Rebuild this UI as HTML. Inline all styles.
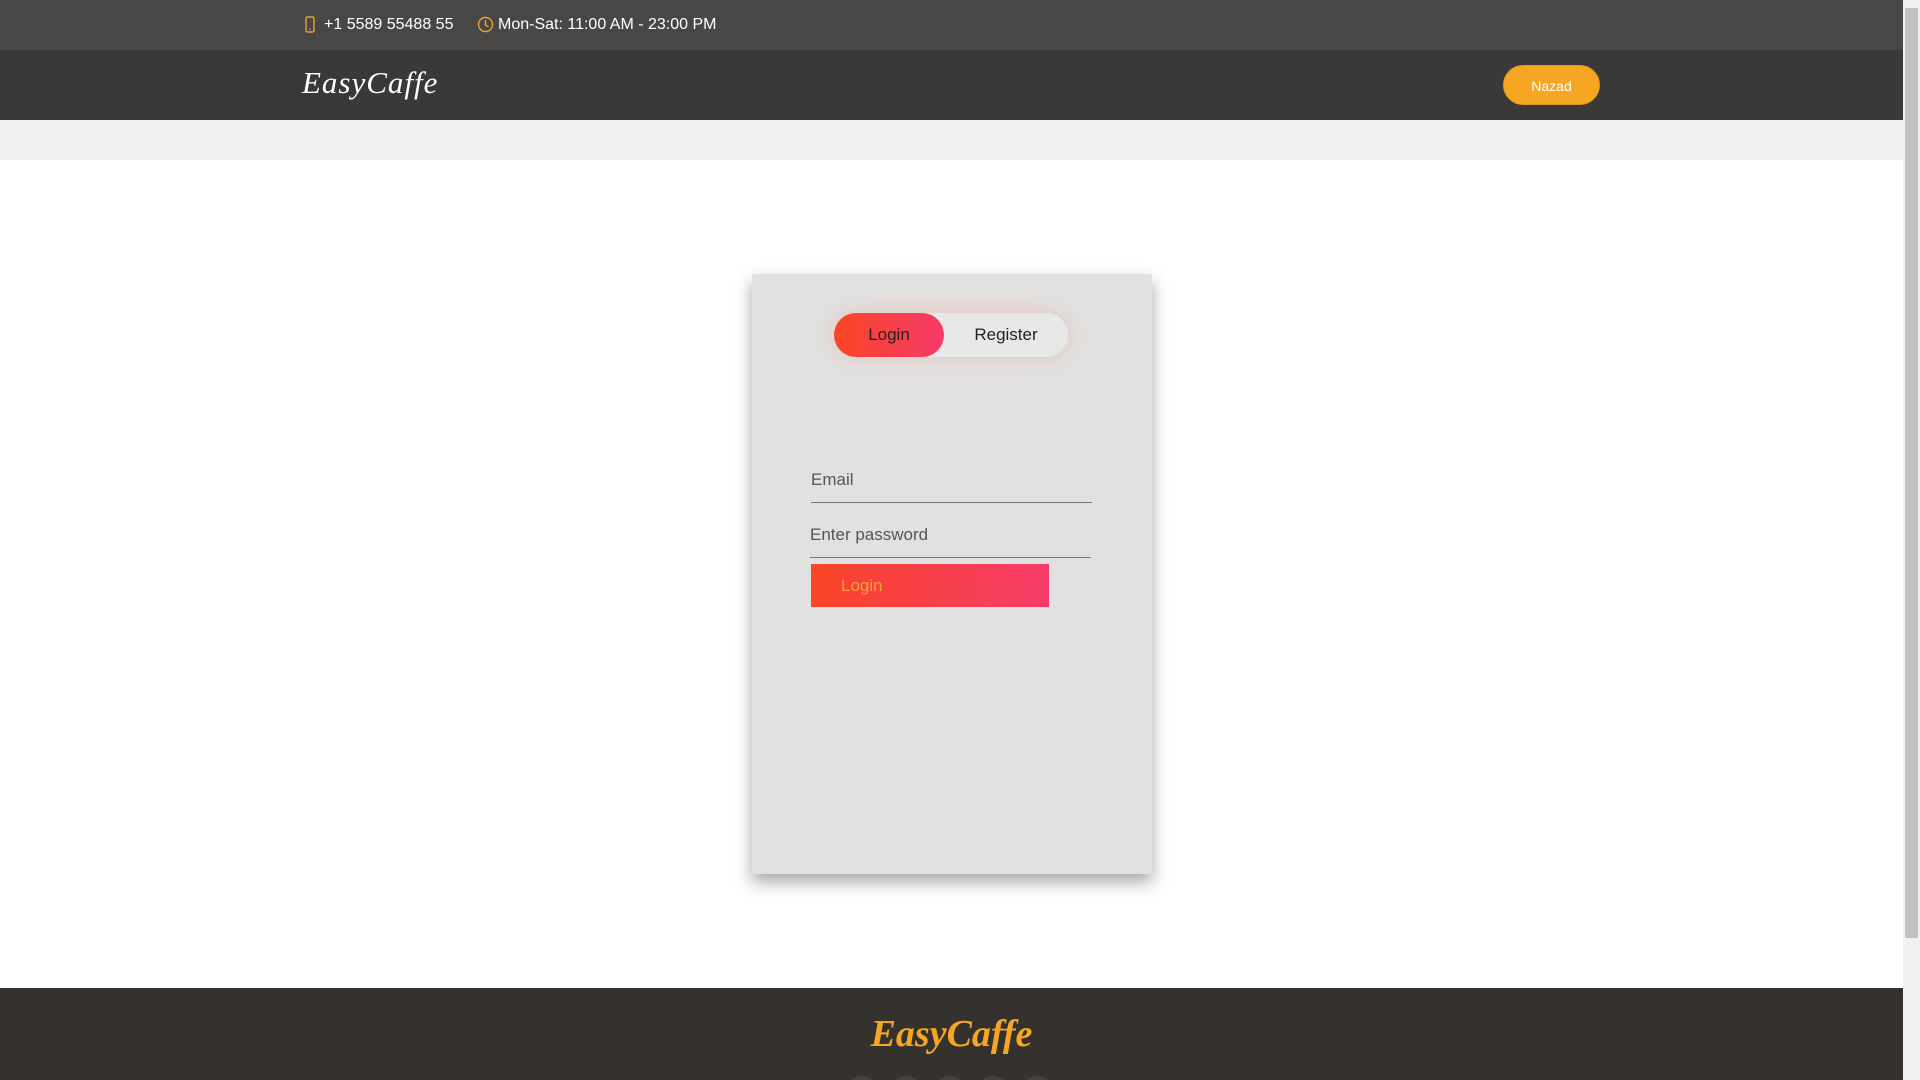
<!DOCTYPE html>
<html style="overflow:hidden;height:1080px"><head><style>
*{margin:0;padding:0;box-sizing:border-box}
body{width:1920px;height:1080px;overflow:hidden;background:#fff;font-family:"Liberation Sans",sans-serif;position:relative}
.top{position:absolute;left:0;top:0;width:1903px;height:50px;background:#484746;color:#fff;font-size:16px}
.hdr{position:absolute;left:0;top:50px;width:1903px;height:70px;background:#3a3938}
.band{position:absolute;left:0;top:120px;width:1903px;height:40px;background:#f2f1ef}
.logo{position:absolute;left:302px;top:15px;color:#fff;font-family:"Liberation Serif",serif;font-style:italic;font-size:31px;letter-spacing:1px}
.nazad{position:absolute;left:1503px;top:15px;width:97px;height:40px;border-radius:20px;background:#f5a623;color:#fff;font-size:14px;text-align:center;line-height:40px;border:1px solid #e8961a}
.card{position:absolute;left:752px;top:274px;width:400px;height:600px;background:#e1e1e1;box-shadow:0 8px 16px rgba(0,0,0,.35)}
.pill{position:absolute;left:82px;top:39px;width:234px;height:44px;border-radius:22px;background:#e8e8e8;box-shadow:0 0 25px rgba(240,150,120,.35)}
.act{position:absolute;left:0;top:0;width:110px;height:44px;border-radius:22px;background:linear-gradient(90deg,#fa4626,#f73a68);color:#222;font-size:17px;text-align:center;line-height:44px}
.reg{position:absolute;left:110px;top:0;width:124px;height:44px;color:#222;font-size:17px;text-align:center;line-height:44px}
.f{position:absolute;left:59px;width:281px;border-bottom:1.5px solid #777;color:#555;font-size:17px;padding-bottom:12px}
.btn{position:absolute;left:59px;top:290px;width:238px;height:43px;background:linear-gradient(90deg,#fa4528,#f73b6a);color:#f9a040;font-size:17px;line-height:43px;padding-left:30px}
.foot{position:absolute;left:0;top:988px;width:1903px;height:92px;background:#35312d;overflow:hidden}
.flogo{position:absolute;left:0;width:1903px;top:24px;text-align:center;color:#f5a623;font-family:"Liberation Serif",serif;font-style:italic;font-weight:bold;font-size:38px}
.c{position:absolute;top:88px;width:36px;height:36px;border-radius:50%;background:#45413d}
.sb{position:absolute;left:1903px;top:0;width:17px;height:1080px;background:#f1f1f1}
.sb i{position:absolute;left:2px;top:8px;width:13px;height:930px;background:#c1c1c1;border-radius:1px}
</style></head><body>
<div class="top">
<svg style="position:absolute;left:305px;top:16px" width="10" height="17" viewBox="0 0 10 17"><rect x="1" y="1" width="8" height="15" rx="1.5" fill="none" stroke="#e8a23a" stroke-width="1.4"/><circle cx="5" cy="13" r=".8" fill="#e8a23a"/></svg>
<span style="position:absolute;left:324px;top:16px">+1 5589 55488 55</span>
<svg style="position:absolute;left:477px;top:16px" width="17" height="17" viewBox="0 0 17 17"><circle cx="8.5" cy="8.5" r="7" fill="none" stroke="#e8a23a" stroke-width="1.4"/><path d="M8.5 4v5l3 2" fill="none" stroke="#e8a23a" stroke-width="1.4"/></svg>
<span style="position:absolute;left:498px;top:16px">Mon-Sat: 11:00 AM - 23:00 PM</span>
</div>
<div class="hdr"><div class="logo">EasyCaffe</div><div class="nazad">Nazad</div></div>
<div class="band"></div>
<div class="card">
<div class="pill"><div class="act">Login</div><div class="reg">Register</div></div>
<div class="f" style="top:196px">Email</div>
<div class="f" style="top:251px;left:58px">Enter password</div>
<div class="btn">Login</div>
</div>
<div class="foot"><div class="flogo">EasyCaffe</div>
<div class="c" style="left:844px"></div><div class="c" style="left:888px"></div><div class="c" style="left:932px"></div><div class="c" style="left:975px"></div><div class="c" style="left:1019px"></div></div>
<div class="sb"><i></i></div>
</body></html>
